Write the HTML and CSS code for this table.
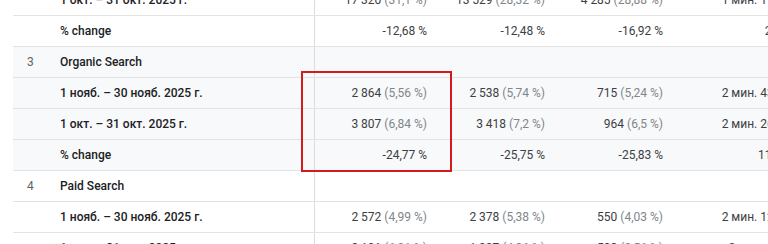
FILE: index.html
```html
<!DOCTYPE html>
<html lang="ru">
<head>
<meta charset="utf-8">
<link rel="stylesheet" href="styles.css">
</head>
<body>
<div class="table">
  <div class="row">
    <div class="idx"></div><div class="label">1 окт. – 31 окт. 2025 г.</div>
    <div class="num">17 320 <span class="pct">(31,1 %)</span></div>
    <div class="num">13 529 <span class="pct">(28,32 %)</span></div>
    <div class="num">4 285 <span class="pct">(28,88 %)</span></div>
    <div class="num">1 мин. 17 сек.</div>
  </div>
  <div class="row">
    <div class="idx"></div><div class="label">% change</div>
    <div class="num">-12,68 %</div>
    <div class="num">-12,48 %</div>
    <div class="num">-16,92 %</div>
    <div class="num">2,31 %</div>
  </div>
  <div class="row alt">
    <div class="idx">3</div><div class="label">Organic Search</div>
    <div class="num"></div><div class="num"></div><div class="num"></div><div class="num"></div>
  </div>
  <div class="row alt">
    <div class="idx"></div><div class="label">1 нояб. – 30 нояб. 2025 г.</div>
    <div class="num">2 864 <span class="pct">(5,56 %)</span></div>
    <div class="num">2 538 <span class="pct">(5,74 %)</span></div>
    <div class="num">715 <span class="pct">(5,24 %)</span></div>
    <div class="num">2 мин. 43 сек.</div>
  </div>
  <div class="row alt">
    <div class="idx"></div><div class="label">1 окт. – 31 окт. 2025 г.</div>
    <div class="num">3 807 <span class="pct">(6,84 %)</span></div>
    <div class="num">3 418 <span class="pct">(7,2 %)</span></div>
    <div class="num">964 <span class="pct">(6,5 %)</span></div>
    <div class="num">2 мин. 26 сек.</div>
  </div>
  <div class="row alt">
    <div class="idx"></div><div class="label">% change</div>
    <div class="num">-24,77 %</div>
    <div class="num">-25,75 %</div>
    <div class="num">-25,83 %</div>
    <div class="num">11,52 %</div>
  </div>
  <div class="row">
    <div class="idx">4</div><div class="label">Paid Search</div>
    <div class="num"></div><div class="num"></div><div class="num"></div><div class="num"></div>
  </div>
  <div class="row">
    <div class="idx"></div><div class="label">1 нояб. – 30 нояб. 2025 г.</div>
    <div class="num">2 572 <span class="pct">(4,99 %)</span></div>
    <div class="num">2 378 <span class="pct">(5,38 %)</span></div>
    <div class="num">550 <span class="pct">(4,03 %)</span></div>
    <div class="num">2 мин. 12 сек.</div>
  </div>
  <div class="row">
    <div class="idx"></div><div class="label">1 окт. – 31 окт. 2025 г.</div>
    <div class="num">3 191 <span class="pct">(6,01 %)</span></div>
    <div class="num">1 907 <span class="pct">(4,36 %)</span></div>
    <div class="num">598 <span class="pct">(3,56 %)</span></div>
    <div class="num">2 мин. 8 сек.</div>
  </div>
</div>
<div class="highlight"></div>
</body>
</html>
```
FILE: styles.css
```css
html, body {
  margin: 0;
  padding: 0;
  background: #ffffff;
  overflow: hidden;
}
body {
  width: 768px;
  height: 244px;
  position: relative;
  font-family: Roboto, "Liberation Sans", sans-serif;
  font-size: 12px;
  color: #3c4043;
}
.table {
  margin-left: 13px;
  margin-top: -15px;
  width: 900px;
}
.row {
  display: grid;
  grid-template-columns: 47px 255px 126px 118px 118px 136px;
  height: 31px;
  box-sizing: border-box;
  border-bottom: 1px solid #e3e3e3;
  align-items: stretch;
}
.row.alt {
  background: #f8f9fa;
}
.row > div {
  display: flex;
  align-items: center;
  white-space: nowrap;
  overflow: hidden;
}
.idx {
  padding-left: 14px;
  color: #5f6368;
}
.label {
  font-weight: 500;
  color: #202124;
  box-sizing: border-box;
  border-right: 1px solid #dadce0;
}
.num {
  justify-content: flex-end;
  padding-right: 14px;
  color: #3c4043;
}
.pct {
  color: #80868b;
  margin-left: 3px;
}
.highlight {
  position: absolute;
  left: 301px;
  top: 71px;
  width: 151px;
  height: 101px;
  box-sizing: border-box;
  border: 2px solid #d21a1f;
}
```
